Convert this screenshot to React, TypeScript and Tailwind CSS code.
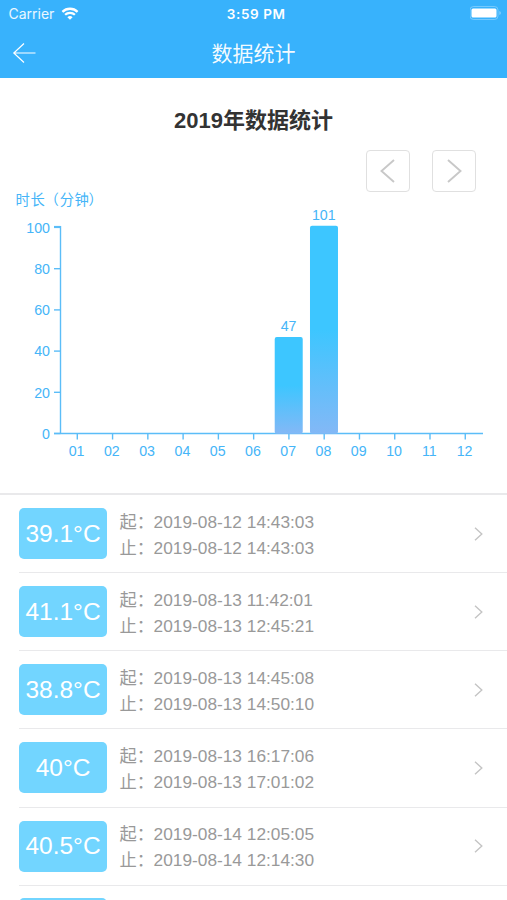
import { ReactNode } from "react"

const months = ["01", "02", "03", "04", "05", "06", "07", "08", "09", "10", "11", "12"]
const minutes = [0, 0, 0, 0, 0, 0, 47, 101, 0, 0, 0, 0]
const ticks = [0, 20, 40, 60, 80, 100]

const records = [
  { temp: "39.1°C", start: "2019-08-12 14:43:03", end: "2019-08-12 14:43:03" },
  { temp: "41.1°C", start: "2019-08-13 11:42:01", end: "2019-08-13 12:45:21" },
  { temp: "38.8°C", start: "2019-08-13 14:45:08", end: "2019-08-13 14:50:10" },
  { temp: "40°C", start: "2019-08-13 16:17:06", end: "2019-08-13 17:01:02" },
  { temp: "40.5°C", start: "2019-08-14 12:05:05", end: "2019-08-14 12:14:30" },
]

function StatusBar() {
  return (
    <div className="grid h-7 grid-cols-3 items-center pl-[8.5px] pr-[5px] font-['Inter',sans-serif] text-white">
      <div className="flex items-center gap-[7px] text-[14px] leading-none text-white/90">
        Carrier
        <svg className="mb-px" width="18" height="13" viewBox="0 0 17 13" fill="none" stroke="#fff" strokeWidth="2.3">
          <path d="M0.9 4.8a11 11 0 0 1 15.2 0" />
          <path d="M3.6 7.8a7 7 0 0 1 9.8 0" />
          <path d="M8.5 12.8L5.9 10.2a3.8 3.8 0 0 1 5.2 0z" fill="#fff" stroke="none" />
        </svg>
      </div>
      <div className="whitespace-nowrap pl-[2px] pt-px text-center text-[13.5px] font-semibold leading-none tracking-[0.6px]">3:59 PM</div>
      <svg className="mb-[2px] ml-auto" width="32" height="14" viewBox="0 0 32 14">
        <rect x="0" y="0.5" width="28" height="13" rx="3.5" fill="none" stroke="#fff" strokeOpacity="0.3" />
        <rect x="1.5" y="2.5" width="25" height="9" rx="1.5" fill="#fff" />
        <path d="M29.5 5v4c1.6-.6 1.6-3.4 0-4z" fill="#fff" fillOpacity="0.5" />
      </svg>
    </div>
  )
}

function NavBar() {
  return (
    <div className="grid h-[50px] grid-cols-3 items-center px-3 text-white">
      <svg className="mb-px" width="24" height="22" viewBox="0 0 24 22" fill="none" stroke="currentColor" strokeWidth="1.2">
        <path d="M12 1.5L1.8 11L12 20.5M1.8 11H23.5" />
      </svg>
      <h1 className="text-center text-[21px] leading-none text-white/95">数据统计</h1>
    </div>
  )
}

function PagerButton({ children }: { children: ReactNode }) {
  return (
    <button className="flex h-[42px] w-[44px] items-center justify-center rounded-[4px] border-[1.5px] border-[#e0e0e0] text-[#c8c8c8]">
      <svg width="18" height="26" viewBox="0 0 18 26" fill="none" stroke="currentColor" strokeWidth="1.9">
        {children}
      </svg>
    </button>
  )
}

function BarChart() {
  const step = 35.27
  const left = 60.5
  const base = 247.5
  const unit = 2.06

  return (
    <svg className="block" width="507" height="307" viewBox="0 0 507 307" fontSize="14.2" fill="#45b5f8">
      <defs>
        <linearGradient id="bar" x1="0" y1="0" x2="0" y2="1">
          <stop offset="0" stopColor="#3dc6ff" />
          <stop offset="0.5" stopColor="#3dc6ff" />
          <stop offset="1" stopColor="#83b8f6" />
        </linearGradient>
      </defs>
      <text x="15.5 30.5 44.5 59.7 74.4 88.6" y="19" fontSize="14.3">时长（分钟）</text>
      <g stroke="#5bbdf8" strokeWidth="1.4">
        <path d={`M${left} 40V${base}`} />
        <path d={`M54 ${base}H483`} />
        {ticks.map((t) => (
          <path
            key={t}
            d={`M54 ${base - t * unit - (t === 100 ? 0.5 : 0)}H${left}`}
            strokeWidth={t === 100 ? 2.2 : 1.4}
          />
        ))}
        {months.map((m, i) => (
          <path key={m} d={`M${77.3 + i * step} ${base}v6`} />
        ))}
      </g>
      {ticks.map((t) => (
        <text key={t} x="50" y={base - t * unit + 5.2} textAnchor="end">{t}</text>
      ))}
      {months.map((m, i) => (
        <text key={m} x={76.6 + i * step} y="270" textAnchor="middle">{m}</text>
      ))}
      {minutes.map((v, i) =>
        v > 0 ? (
          <g key={i}>
            <rect x={63.1 + i * step} y={base - v * unit + 0.3} width="28" height={v * unit} rx="2" fill="url(#bar)" />
            <text x={76.9 + i * step} y={base - v * unit - 5.7} textAnchor="middle">{v}</text>
          </g>
        ) : null
      )}
    </svg>
  )
}

export default function App() {
  return (
    <div className="h-[900px] w-[507px] overflow-hidden bg-white font-['Liberation_Sans','Noto_Sans_CJK_SC',sans-serif]">
      <header className="h-[78px] bg-[#38b2fc]">
        <StatusBar />
        <NavBar />
      </header>

      <section className="border-b-2 border-[#e9e9eb]">
        <h2 className="pt-8 text-center text-[22px] font-bold leading-[22px] text-[#333]">2019年数据统计</h2>
        <div className="mt-[18px] flex h-9 justify-end gap-[22px] pr-[31px]">
          <PagerButton>
            <path d="M15 2L2.5 13L15 24" />
          </PagerButton>
          <PagerButton>
            <path d="M3 2L15.5 13L3 24" />
          </PagerButton>
        </div>
        <BarChart />
      </section>

      <ul className="pl-[19px]">
        {records.map((r) => (
          <li key={r.start} className="flex h-[78.15px] items-center border-b-[1.5px] border-[#e9e9eb] pr-[24.5px]">
            <div className="flex h-[51px] w-[88px] items-center justify-center rounded-[5px] bg-[#72d5ff] pt-px text-[24.5px] text-white">
              {r.temp}
            </div>
            <div className="ml-[12.5px] flex-1 pt-[2px] text-[17.3px] leading-[26px] text-[#999]">
              <p><span className="mr-[-0.5px]">起：</span>{r.start}</p>
              <p><span className="mr-[-0.5px]">止：</span>{r.end}</p>
            </div>
            <svg width="9" height="14" viewBox="0 0 9 14" fill="none" stroke="#c4c4c4" strokeWidth="1.4">
              <path d="M1 0.8L7.8 7L1 13.2" />
            </svg>
          </li>
        ))}
        {/* next record, only its top edge is in view */}
        <li className="pt-3">
          <div className="h-[51px] w-[88px] rounded-[5px] bg-[#72d5ff]" />
        </li>
      </ul>
    </div>
  )
}
